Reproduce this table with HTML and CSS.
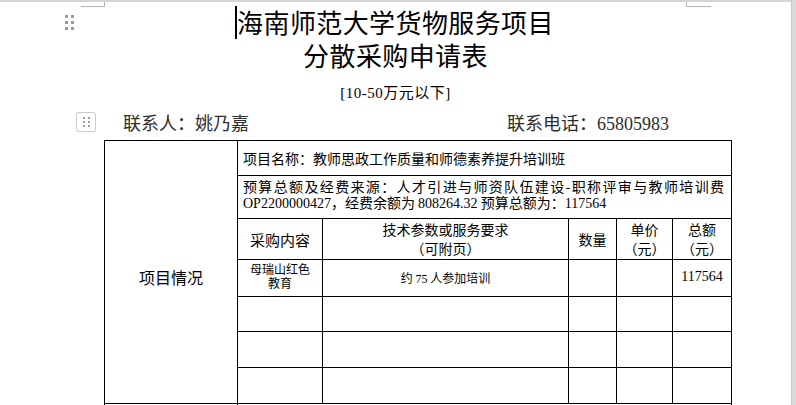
FILE: index.html
```html
<!DOCTYPE html>
<html lang="zh-CN">
<head>
<meta charset="utf-8">
<title>海南师范大学货物服务项目分散采购申请表</title>
<link rel="stylesheet" href="styles.css">
</head>
<body>
<div class="viewport">
  <div class="page">
    <div class="corner corner-left"></div>
    <div class="corner corner-right"></div>
    <div class="drag-handle">
      <span></span><span></span><span></span><span></span><span></span><span></span>
    </div>
    <div class="caret"></div>

    <h1 class="title">海南师范大学货物服务项目<br>分散采购申请表</h1>
    <p class="subtitle"><span class="num">[10-50</span>万元以下<span class="num">]</span></p>

    <div class="contact-row">
      <div class="table-handle">
        <span></span><span></span><span></span><span></span><span></span><span></span>
      </div>
      <span class="contact-name">联系人：姚乃嘉</span>
      <span class="contact-phone">联系电话：<span class="num">65805983</span></span>
    </div>

    <table class="form">
      <colgroup>
        <col class="c1"><col class="c2"><col class="c3"><col class="c4"><col class="c5"><col class="c6">
      </colgroup>
      <tr class="r1">
        <td rowspan="7" class="section">项目情况</td>
        <td colspan="5" class="info">项目名称：教师思政工作质量和师德素养提升培训班</td>
      </tr>
      <tr class="r2">
        <td colspan="5" class="info budget">
          <span class="just">预算总额及经费来源：人才引进与师资队伍建设-职称评审与教师培训费</span>
          <span class="line2"><span class="num">OP2200000427</span>，经费余额为 <span class="num">808264.32</span> 预算总额为：<span class="num">117564</span></span>
        </td>
      </tr>
      <tr class="r3 head">
        <td class="h15">采购内容</td>
        <td>技术参数或服务要求<br>（可附页）</td>
        <td>数量</td>
        <td>单价<br>（元）</td>
        <td>总额<br>（元）</td>
      </tr>
      <tr class="r4">
        <td class="item">母瑞山红色<br>教育</td>
        <td class="desc">约 <span class="num">75</span> 人参加培训</td>
        <td></td>
        <td></td>
        <td class="amount num">117564</td>
      </tr>
      <tr class="r5"><td></td><td></td><td></td><td></td><td></td></tr>
      <tr class="r6"><td></td><td></td><td></td><td></td><td></td></tr>
      <tr class="r7"><td></td><td></td><td></td><td></td><td></td></tr>
      <tr class="r8"><td></td><td colspan="5"></td></tr>
    </table>
  </div>
  <div class="gutter"></div>
</div>
</body>
</html>
```

FILE: styles.css
```css
html, body {
  margin: 0;
  padding: 0;
  height: 100%;
  overflow: hidden;
  background: #ffffff;
}

body {
  font-family: "Noto Sans CJK SC", "Noto Sans", sans-serif;
  color: #000;
}

.viewport {
  display: flex;
  height: 405px;
}

.page {
  position: relative;
  width: 791px;
  flex: none;
  border-top: 2px solid #d4d4d4;
  background: #fff;
}

.gutter {
  flex: 1;
  background: #d9d9d9;
  border-left: 1px solid #c9c9c9;
}

.corner {
  position: absolute;
  top: 0;
  height: 4px;
  border-bottom: 1px solid #b4b4b4;
}

.corner-left {
  left: 81px;
  width: 23px;
  border-right: 1px solid #b4b4b4;
}

.corner-right {
  left: 686px;
  width: 24px;
  border-left: 1px solid #b4b4b4;
}

.drag-handle {
  position: absolute;
  left: 65px;
  top: 13px;
  width: 9px;
  display: grid;
  grid-template-columns: 3px 3px;
  column-gap: 3px;
  row-gap: 3px;
}

.drag-handle span {
  width: 3px;
  height: 3px;
  background: #9a9a9a;
}

.caret {
  position: absolute;
  left: 235px;
  top: 4px;
  width: 2px;
  height: 33px;
  background: #000;
}

.title {
  margin: 4px 0 0;
  font-size: 26px;
  font-weight: normal;
  line-height: 32.5px;
  text-align: center;
  letter-spacing: 0.4px;
}

.subtitle {
  margin: 11px 0 0;
  font-size: 15px;
  line-height: 20px;
  text-align: center;
  letter-spacing: 0.5px;
}

.num {
  font-family: "Liberation Serif", "Noto Sans CJK SC", serif;
}

.contact-row {
  position: relative;
  display: flex;
  margin: 7px 0 0;
  padding-left: 123px;
  font-size: 18px;
  line-height: 24px;
  color: #2e2e2e;
}

.contact-name {
  width: 384px;
  flex: none;
}

.table-handle {
  position: absolute;
  left: 76px;
  top: 2px;
  width: 18px;
  height: 18px;
  border: 1px solid #c8c8c8;
  border-radius: 3px;
  display: grid;
  grid-template-columns: 2px 2px;
  grid-auto-rows: 2px;
  column-gap: 3px;
  row-gap: 2px;
  align-content: center;
  justify-content: center;
}

.table-handle span {
  background: #a0a0a0;
}

.form {
  margin: 4px 0 0 104px;
  width: 627px;
  table-layout: fixed;
  border-collapse: collapse;
  font-size: 14px;
}

.form td {
  border: 1px solid #000;
  padding: 0;
  text-align: center;
  vertical-align: middle;
}

.c1 { width: 133px; }
.c2 { width: 85px; }
.c3 { width: 246px; }
.c4 { width: 48px; }
.c5 { width: 56px; }
.c6 { width: 59px; }

.r1 { height: 35px; }
.r2 { height: 43px; }
.r3 { height: 41px; }
.r4 { height: 37px; }
.r5 { height: 35px; }
.r6 { height: 36px; }
.r7 { height: 36px; }
.r8 { height: 50px; }

.form td.section {
  font-size: 16px;
  padding-top: 9px;
}

.form td.info {
  text-align: left;
  padding: 0 7px 0 5px;
  line-height: 16px;
}

.form td.budget {
  vertical-align: top;
  padding-top: 3px;
  line-height: 15.5px;
}

.just {
  display: block;
  text-align: justify;
  text-align-last: justify;
}

.line2 {
  display: block;
}

.head td {
  line-height: 19px;
}

.form .head td.h15 {
  font-size: 15px;
}

.form td.item {
  font-size: 12px;
  line-height: 14px;
  vertical-align: top;
  padding-top: 2px;
}

.form td.desc {
  font-size: 12px;
}

.form td.amount {
  font-size: 14px;
  padding-bottom: 3px;
}
```
